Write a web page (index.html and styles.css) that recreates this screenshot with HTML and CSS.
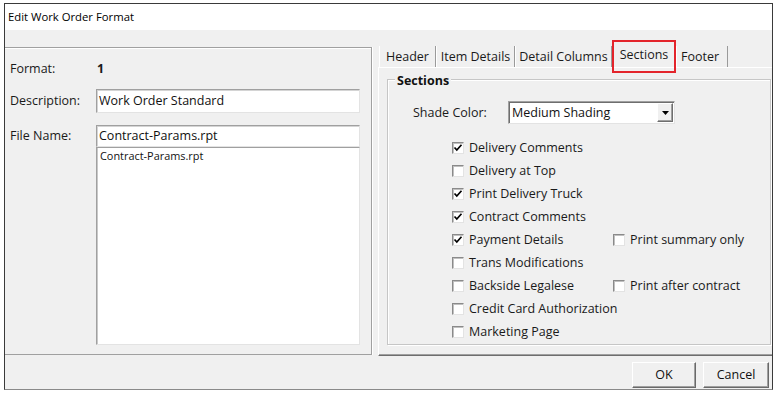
FILE: index.html
```html
<!DOCTYPE html>
<html>
<head>
<meta charset="utf-8">
<title>Edit Work Order Format</title>
<link rel="stylesheet" href="styles.css">
</head>
<body>
<div class="window">
  <div class="titlebar">Edit Work Order Format</div>
  <div class="client">
    <div class="main">
      <div class="left-panel">
        <div class="form">
          <div class="label">Format:</div>
          <div class="value">1</div>
          <div class="label">Description:</div>
          <div class="textbox">Work Order Standard</div>
          <div class="label file-label">File Name:</div>
          <div class="file-block">
            <div class="textbox file-input">Contract-Params.rpt</div>
            <div class="listbox"><div class="list-item">Contract-Params.rpt</div></div>
          </div>
        </div>
      </div>
      <div class="tab-area">
        <div class="tabstrip">
          <div class="tab tab-header">Header</div>
          <div class="tab tab-items">Item Details</div>
          <div class="tab tab-columns">Detail Columns</div>
          <div class="tab tab-sections selected">Sections</div>
          <div class="tab tab-footer">Footer</div>
        </div>
        <div class="tabpage">
          <div class="group">
            <div class="group-title">Sections</div>
            <div class="shade-row">
              <span class="shade-label">Shade Color:</span>
              <div class="combo">
                <span class="combo-text">Medium Shading</span>
                <span class="combo-btn"><svg width="7" height="4" viewBox="0 0 7 4"><path d="M0 0H7L3.5 4Z" fill="#000"/></svg></span>
              </div>
            </div>
            <div class="checks">
              <div class="check"><span class="box checked"><svg width="10" height="10" viewBox="0 0 10 10"><path d="M1.5 4.5L3.8 7L8.5 1.8" fill="none" stroke="#000" stroke-width="1.7"/></svg></span><span>Delivery Comments</span></div>
              <div></div>
              <div class="check"><span class="box"></span><span>Delivery at Top</span></div>
              <div></div>
              <div class="check"><span class="box checked"><svg width="10" height="10" viewBox="0 0 10 10"><path d="M1.5 4.5L3.8 7L8.5 1.8" fill="none" stroke="#000" stroke-width="1.7"/></svg></span><span>Print Delivery Truck</span></div>
              <div></div>
              <div class="check"><span class="box checked"><svg width="10" height="10" viewBox="0 0 10 10"><path d="M1.5 4.5L3.8 7L8.5 1.8" fill="none" stroke="#000" stroke-width="1.7"/></svg></span><span>Contract Comments</span></div>
              <div></div>
              <div class="check"><span class="box checked"><svg width="10" height="10" viewBox="0 0 10 10"><path d="M1.5 4.5L3.8 7L8.5 1.8" fill="none" stroke="#000" stroke-width="1.7"/></svg></span><span>Payment Details</span></div>
              <div class="check"><span class="box"></span><span>Print summary only</span></div>
              <div class="check"><span class="box"></span><span>Trans Modifications</span></div>
              <div></div>
              <div class="check"><span class="box"></span><span>Backside Legalese</span></div>
              <div class="check"><span class="box"></span><span>Print after contract</span></div>
              <div class="check"><span class="box"></span><span>Credit Card Authorization</span></div>
              <div></div>
              <div class="check"><span class="box"></span><span>Marketing Page</span></div>
              <div></div>
            </div>
          </div>
        </div>
      </div>
    </div>
    <div class="footer">
      <div class="btn btn-ok">OK</div>
      <div class="btn btn-cancel">Cancel</div>
    </div>
  </div>
</div>
</body>
</html>
```

FILE: styles.css
```css
html, body {
  margin: 0;
  padding: 0;
  background: #ffffff;
}
body {
  font-family: "Open Sans", "Noto Sans", sans-serif;
  font-size: 12.5px;
  color: #1a1a1a;
}
.window {
  margin: 3px 0 0 4px;
  width: 769px;
  height: 387px;
  box-sizing: border-box;
  border: 1px solid #3a3a3a;
  border-bottom-color: #8a8a8a;
  display: flex;
  flex-direction: column;
}
.titlebar {
  height: 26px;
  line-height: 26px;
  padding-left: 3px;
  background: #ffffff;
  color: #000;
  font-size: 11.3px;
  flex: none;
}
.client {
  flex: 1;
  background: #f0f0f0;
  display: flex;
  flex-direction: column;
}
.main {
  display: flex;
  height: 326px;
  flex: none;
}
.left-panel {
  margin-top: 17px;
  width: 367px;
  height: 308px;
  box-sizing: border-box;
  border-top: 1px solid #a0a0a0;
  border-right: 1px solid #a0a0a0;
  border-bottom: 1px solid #a0a0a0;
  box-shadow: inset 0 1px 0 #ffffff, 1px 0 0 #ffffff;
  flex: none;
}
.form {
  display: grid;
  grid-template-columns: 86px 264px;
  row-gap: 12px;
  padding: 13px 0 0 5px;
}
.label {
  line-height: 16px;
  align-self: center;
}
.value {
  font-weight: 700;
  line-height: 16px;
  padding-left: 1px;
}
.file-label {
  align-self: start;
  line-height: 22px;
}
.textbox {
  height: 24px;
  box-sizing: border-box;
  background: #fff;
  border: 1px solid;
  border-color: #a0a0a0 #e3e3e3 #e3e3e3 #a0a0a0;
  box-shadow: inset 1px 1px 0 #d4d4d4;
  line-height: 22px;
  padding-left: 2px;
  color: #111;
}
.file-input {
  height: 22px;
  line-height: 20px;
}
.listbox {
  height: 198px;
  box-sizing: border-box;
  background: #fff;
  border: 1px solid;
  border-color: #a0a0a0 #e3e3e3 #e3e3e3 #a0a0a0;
  box-shadow: inset 1px 0 0 #c8c8c8;
}
.list-item {
  font-size: 10.9px;
  line-height: 14px;
  margin-top: 1px;
  padding-left: 3px;
  color: #111;
}
.tab-area {
  margin-left: 6px;
  flex: 1;
  display: flex;
  flex-direction: column;
}
.tabstrip {
  margin-top: 11px;
  height: 26px;
  display: flex;
  align-items: flex-end;
  padding-left: 1px;
  flex: none;
}
.tab {
  height: 21px;
  box-sizing: border-box;
  padding-top: 3px;
  line-height: 16px;
  text-align: center;
  white-space: nowrap;
  border-left: 1px solid #ffffff;
  border-right: 1px solid #9a9a9a;
  color: #1a1a1a;
}
.tab-header { width: 57px; }
.tab-items { width: 79px; }
.tab-columns { width: 97px; }
.tab-sections { width: 64px; }
.tab-footer { width: 52px; text-align: left; padding-left: 4px; }
.tab.selected {
  height: 26px;
  padding-top: 6px;
  position: relative;
  border-right-color: transparent;
}
.tab.selected::after {
  content: "";
  position: absolute;
  left: -1px;
  top: -1px;
  width: 64px;
  height: 33px;
  box-sizing: border-box;
  border: 2px solid #e3242b;
}
.tabpage {
  height: 289px;
  box-sizing: border-box;
  border-top: 1px solid #ffffff;
  border-left: 1px solid #ffffff;
  border-bottom: 1px solid #6e6e6e;
  box-shadow: inset 0 -1px 0 #a0a0a0;
  padding: 11px 1px 0 8px;
}
.group {
  height: 266px;
  box-sizing: border-box;
  border: 1px solid #c6c6c6;
  box-shadow: inset 1px 1px 0 #ffffff, 1px 1px 0 #ffffff;
}
.group-title {
  margin: -7px 0 0 7px;
  padding: 0 2px;
  width: fit-content;
  background: #f0f0f0;
  font-weight: 700;
  line-height: 16px;
  color: #111;
}
.shade-row {
  margin-top: 12px;
  display: flex;
  align-items: center;
  height: 23px;
  padding-left: 25px;
}
.shade-label {
  width: 95px;
  flex: none;
}
.combo {
  width: 167px;
  height: 23px;
  box-sizing: border-box;
  background: #fff;
  border: 1px solid;
  border-color: #a0a0a0 #e3e3e3 #e3e3e3 #a0a0a0;
  box-shadow: inset 1px 1px 0 #6e6e6e;
  display: flex;
  align-items: center;
  justify-content: space-between;
  padding: 1px 1px 1px 3px;
}
.combo-text {
  color: #111;
}
.combo-btn {
  width: 16px;
  height: 19px;
  box-sizing: border-box;
  background: #f0f0f0;
  border: 1px solid;
  border-color: #ffffff #6e6e6e #6e6e6e #ffffff;
  box-shadow: inset -1px -1px 0 #a0a0a0;
  display: flex;
  align-items: center;
  justify-content: center;
}
.checks {
  margin-top: 12px;
  padding-left: 64px;
  display: grid;
  grid-template-columns: 161px auto;
  grid-auto-rows: 23px;
}
.check {
  display: flex;
  align-items: center;
  line-height: 16px;
  white-space: nowrap;
}
.box {
  width: 12px;
  height: 12px;
  box-sizing: border-box;
  background: #fff;
  border: 1px solid;
  border-color: #8a8a8a #e3e3e3 #e3e3e3 #8a8a8a;
  box-shadow: inset 1px 1px 0 #c0c0c0;
  margin-right: 5px;
  display: flex;
  align-items: center;
  justify-content: center;
  flex: none;
}
.footer {
  display: flex;
  justify-content: flex-end;
  gap: 7px;
  padding: 6px 3px 0 0;
}
.btn {
  height: 26px;
  box-sizing: border-box;
  background: #f0f0f0;
  border: 1px solid;
  border-color: #ffffff #696969 #696969 #ffffff;
  box-shadow: inset -1px -1px 0 #a0a0a0;
  text-align: center;
  line-height: 23px;
  color: #111;
}
.btn-ok { width: 64px; }
.btn-cancel { width: 66px; }
```
